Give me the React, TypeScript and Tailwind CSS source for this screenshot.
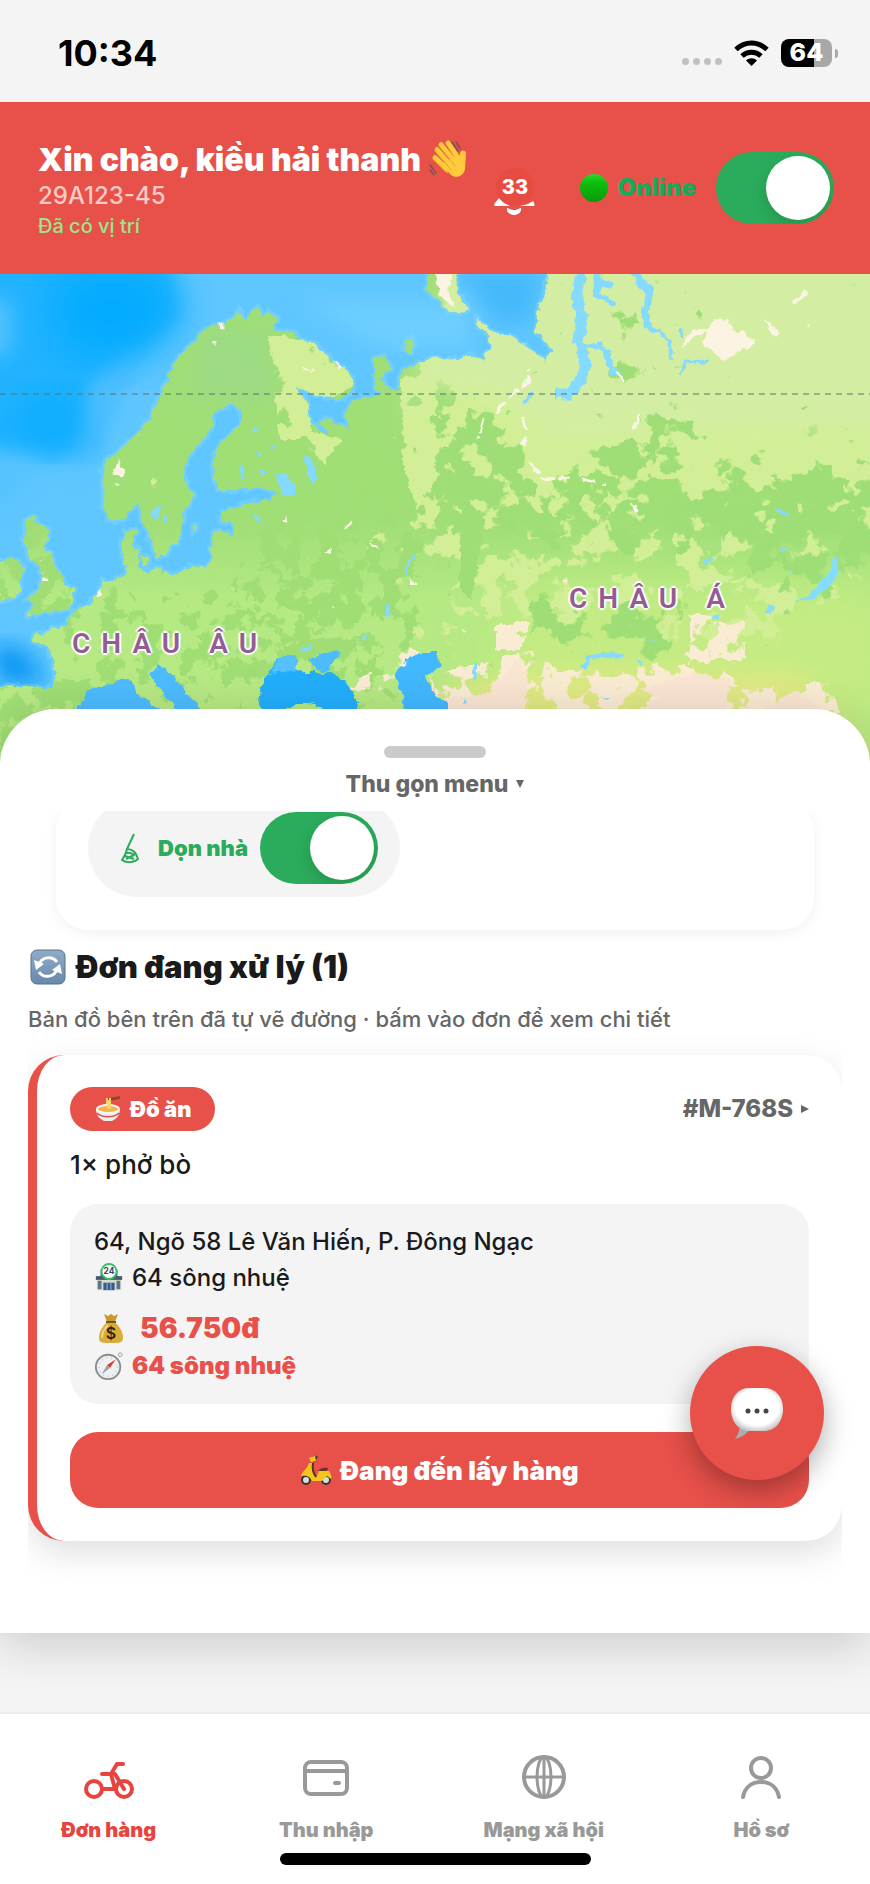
import { useState } from 'react'
import type { ReactNode } from 'react'
import { clsx } from 'clsx'

const font = "font-['Inter','Noto_Sans',sans-serif]"

export default function App() {
  const [online, setOnline] = useState(true)
  const [cleaning, setCleaning] = useState(true)
  const [tab, setTab] = useState(0)

  return (
    <div className={clsx('flex min-h-screen flex-col bg-[#f4f4f4] text-[#1a1a1a]', font)}>
      <StatusBar />
      <header className="flex h-[172px] items-center bg-[#e8504a] pr-9 pl-[38px]">
        <div className="flex-1">
          <h1 className="flex items-center gap-2 pt-1 text-[32px] leading-10 font-black whitespace-nowrap text-white">
            Xin chào, kiều hải thanh <WaveIcon />
          </h1>
          <p className="text-[24px] leading-8 font-medium text-[#fbcac6]">29A123-45</p>
          <p className="text-[20px] leading-7 font-medium text-[#9be58a]">Đã có vị trí</p>
        </div>
        <button aria-label="Thông báo" className="mr-9 flex w-14 justify-center">
          <BellIcon />
        </button>
        <label className="flex items-center text-[24px] leading-8 font-black text-[#17aa5b]">
          <GreenDot />
          <span className="mr-5 ml-2">Online</span>
          <Switch checked={online} onChange={setOnline} />
        </label>
      </header>

      <main className="relative flex-1">
        <WorldMap />
        <section className="relative z-10 -mt-16 rounded-t-[56px] bg-white pb-[92px] shadow-[0_10px_50px_rgba(0,0,0,0.18)]">
          <button className="flex w-full flex-col items-center pt-[37px] pb-[11px]">
            <span className="h-3 w-[102px] rounded-full bg-[#cbcbcb]" />
            <span className="mt-[10px] flex items-center gap-2 text-[23px] leading-8 font-extrabold text-[#666]">
              Thu gọn menu <Caret className="rotate-90" />
            </span>
          </button>

          <div className="overflow-hidden px-14 pb-3">
            <div className="-mt-3 rounded-[32px] bg-white px-8 pb-[33px] shadow-[0_3px_14px_rgba(0,0,0,0.06)]">
              <label className="flex h-[98px] w-fit items-center rounded-full bg-[#f4f4f4] pr-[22px] pl-8 text-[22px] font-black text-[#2bab5c]">
                <BroomIcon />
                <span className="mr-3 ml-[18px]">Dọn nhà</span>
                <Switch checked={cleaning} onChange={setCleaning} />
              </label>
            </div>
          </div>

          <div className="overflow-x-clip mx-7">
            <h2 className="flex items-center gap-2 pt-[5px] text-[31px] leading-10 font-black">
              <RefreshIcon /> Đơn đang xử lý (1)
            </h2>
            <p className="mt-4 text-[22px] leading-8 font-medium text-[#666]">
              Bản đồ bên trên đã tự vẽ đường · bấm vào đơn để xem chi tiết
            </p>
            <Order />
          </div>
        </section>
        <button
          aria-label="Tin nhắn"
          className="absolute right-[46px] bottom-[232px] z-20 flex size-[134px] items-center justify-center rounded-full bg-[#e8504a] shadow-[0_10px_28px_rgba(0,0,0,0.32)]"
        >
          <ChatIcon />
        </button>
        <div className="h-19" />
      </main>

      <nav className="relative border-t-2 border-[#ebebeb] bg-white pt-9 pb-[19px]">
        <div className="grid grid-cols-4">
          {tabs.map((t, i) => (
            <button
              key={t.label}
              onClick={() => setTab(i)}
              className={clsx(
                'flex flex-col items-center text-[20px] leading-7 font-black',
                i == tab ? 'text-[#e8443f]' : 'text-[#999]'
              )}
            >
              <svg
                viewBox="0 0 56 56"
                className="mb-[10px] size-14 fill-none stroke-current stroke-[4]"
                strokeLinecap="round"
                strokeLinejoin="round"
              >
                {t.icon}
              </svg>
              <span>{t.label}</span>
            </button>
          ))}
        </div>
        <div className="mx-auto mt-[9px] h-3 w-[311px] rounded-full bg-black" />
      </nav>
    </div>
  )
}

const tabs: { label: string; icon: ReactNode }[] = [
  {
    label: 'Đơn hàng',
    icon: (
      <>
        <circle cx="13" cy="39" r="8" />
        <circle cx="43" cy="39" r="8" />
        <path d="M21 39h13L30 24M21 24h9l6-10h6M34 24l9 15" />
      </>
    ),
  },
  {
    label: 'Thu nhập',
    icon: (
      <>
        <rect x="7" y="12" width="42" height="32" rx="6" />
        <path d="M7 21h42M37 33h4" />
      </>
    ),
  },
  {
    label: 'Mạng xã hội',
    icon: (
      <>
        <circle cx="28" cy="27" r="20" />
        <ellipse cx="28" cy="27" rx="7" ry="20" className="stroke-[3]" />
        <path d="M28 7v40M8 27h40" className="stroke-[3]" />
      </>
    ),
  },
  {
    label: 'Hồ sơ',
    icon: (
      <>
        <circle cx="28" cy="18" r="10" />
        <path d="M10 47c2-10 9-15 18-15s16 5 18 15" />
      </>
    ),
  },
]

function Order() {
  return (
    <article className="mt-5 rounded-[36px] border-l-[9px] border-[#e8504a] bg-white px-[33px] pt-8 pb-[33px] shadow-[0_12px_34px_rgba(0,0,0,0.13)]">
      <div className="flex items-center justify-between">
        <span className="flex h-11 items-center gap-2 rounded-full bg-[#e8504a] px-6 text-[22px] font-black text-white">
          <BowlIcon /> Đồ ăn
        </span>
        <a href="#order" className="flex items-center gap-2 text-[24px] font-extrabold text-[#666]">
          #M-768S <Caret />
        </a>
      </div>
      <p className="mt-[18px] text-[26px] leading-8 font-medium">1× phở bò</p>
      <div className="mt-[23px] rounded-[28px] bg-[#f4f4f4] px-6 pt-5 pb-5 text-[24px] leading-9 font-medium">
        <p>64, Ngõ 58 Lê Văn Hiến, P. Đông Ngạc</p>
        <p className="flex items-center gap-2">
          <StoreIcon /> 64 sông nhuệ
        </p>
        <p className="mt-3 flex items-center gap-4 pl-1 text-[28px] leading-10 font-black text-[#e8504a]">
          <MoneyIcon /> 56.750đ
        </p>
        <p className="flex items-center gap-2 font-black text-[#e8504a]">
          <CompassIcon /> 64 sông nhuệ
        </p>
      </div>
      <button className="mt-7 flex h-[76px] w-full items-center justify-center gap-2 rounded-[28px] bg-[#e8504a] text-[26px] font-black text-white">
        <ScooterIcon /> Đang đến lấy hàng
      </button>
    </article>
  )
}

type SwitchProps = {
  checked: boolean
  onChange: (v: boolean) => void
}
function Switch({ checked, onChange }: SwitchProps) {
  return (
    <input
      type="checkbox"
      role="switch"
      checked={checked}
      onChange={(e) => onChange(e.target.checked)}
      className="flex h-[72px] w-[118px] shrink-0 appearance-none items-center overflow-hidden rounded-full bg-gray-300 px-1 before:block before:size-16 before:rounded-full before:bg-white before:shadow-[0_6px_16px_rgba(0,0,0,0.15)] checked:justify-end checked:bg-[#2bac5c]"
    />
  )
}

function StatusBar() {
  return (
    <div className="flex h-[102px] items-center justify-between pt-1 pr-8 pl-[58px] text-black">
      <span className="text-[36px] font-bold">10:34</span>
      <div className="flex items-center">
        <div className="mt-4 mr-3 flex gap-1">
          {[0, 1, 2, 3].map((i) => (
            <span key={i} className="size-[7px] rounded-full bg-[#c0c0c0]" />
          ))}
        </div>
        <svg viewBox="0 0 35 26" className="mr-3 h-[26px] w-[35px]" fill="none" stroke="#000" strokeWidth="5">
          <path d="M2 9.500C11 .8 24 .8 33 9.500" />
          <path d="M8 16c5.500-5 13.500-5 19 0" />
          <path d="M17.500 26l-5.500-5.500c3-3 8-3 11 0z" fill="#000" stroke="none" />
        </svg>
        <div className="flex h-7 w-[51px] items-center justify-center rounded-lg bg-linear-to-r from-black from-64% to-[#a8a8a8] to-64% text-[25px] font-extrabold text-white">
          64
        </div>
        <span className="ml-[3px] h-[9px] w-[3px] rounded-r-full bg-[#a8a8a8]" />
      </div>
    </div>
  )
}

const land =
  'M258 305L263 316L268 312L278 318L272 330L285 332L295 333L300 340L316 345L330 358L345 370L353 381L352 390L345 398L335 400L320 395L305 391L294 387L300 395L308 403L310 420L322 432L332 437L328 430L320 424L325 418L335 425L348 427L345 415L352 402L365 396L380 396L375 385L375 370L373 358L385 356L391 368L380 378L390 388L398 390L400 375L415 364L432 358L450 360L470 356L483 358L492 348L488 333L510 335L525 345L540 355L546 362L551 350L543 340L535 332L538 310L545 295L548 264H880V790H-10V690L3 687L20 685L40 688L53 688L56 670L53 658L47 645L35 642L33 635L48 633L52 628L68 625L70 618L78 610L90 602L98 592L103 582L115 580L127 573L124 560L121 545L125 533L136 530L132 545L140 550L138 565L145 572L158 568L170 575L180 572L192 565L203 568L213 560L211 548L214 532L222 530L232 538L235 530L228 522L220 520L222 512L230 510L250 502L270 500L277 492L260 487L235 490L217 490L215 480L214 465L215 450L225 440L240 425L243 415L235 405L220 408L213 415L212 425L205 440L195 448L186 460L184 475L188 486L194 497L183 515L180 530L178 543L170 545L165 555L157 557L150 540L143 520L139 503L135 506L125 517L115 522L107 518L103 505L105 490L102 472L105 462L118 452L130 440L140 430L150 418L155 405L162 392L168 380L172 368L180 355L190 345L200 334L212 326L225 325L240 310L245 322Z'
const islands =
  'M25 520L35 516L37 525L48 528L48 538L43 548L50 552L57 570L65 585L75 590L73 600L70 610L55 612L40 613L28 617L35 605L27 598L38 590L42 580L40 565L30 560L25 545L25 530ZM-9 562L15 560L23 563L22 575L20 590L12 598L-9 603ZM430 264H455L457 290L467 311L450 313L440 300L426 290ZM404 340l8-2l4 6l-5 9l-6-2ZM476 318l6 6l10 8l-4 2l-10-8ZM192 528l5-4l-2 7l-3 3ZM127 692l5 5l-3 8l-4-4ZM140 558l8-2l2 8l-7 2Z'

// Terrain patches: noise is thresholded, the alpha of the shape sets how dense they are
function PatchFilter({ id, color, freq, seed }: { id: string; color: string; freq: string; seed: number }) {
  return (
    <filter id={id} x="0" y="0" width="1" height="1" colorInterpolationFilters="sRGB">
      <feTurbulence type="fractalNoise" baseFrequency={freq} numOctaves="4" seed={seed} />
      <feColorMatrix values="0 0 0 0 0 0 0 0 0 0 0 0 0 0 0 1 0 0 0 0" result="noise" />
      <feComposite in="noise" in2="SourceAlpha" operator="arithmetic" k1="0" k2="1" k3="0.7" k4="0" />
      <feComponentTransfer result="mask">
        <feFuncA type="linear" slope="22" intercept="-18.5" />
      </feComponentTransfer>
      <feFlood floodColor={color} />
      <feComposite in2="mask" operator="in" />
    </filter>
  )
}

function WorldMap() {
  return (
    <div className="relative h-[499px] overflow-hidden bg-[#5fc6ff]">
      <svg viewBox="0 274 870 499" preserveAspectRatio="xMidYMid slice" className="size-full">
        <defs>
          <filter id="soft" x="-.3" y="-.3" width="1.6" height="1.6">
            <feGaussianBlur stdDeviation="10" />
          </filter>
          <filter id="wide" x="-.3" y="-.3" width="1.6" height="1.6">
            <feGaussianBlur stdDeviation="24" />
          </filter>
          <filter id="rough" x="0" y="0" width="1" height="1">
            <feTurbulence type="fractalNoise" baseFrequency=".11" numOctaves="3" seed="4" result="n" />
            <feDisplacementMap in="SourceGraphic" in2="n" scale="8" xChannelSelector="R" yChannelSelector="G" />
          </filter>
          <PatchFilter id="pale" color="#d2ef97" freq=".034" seed={8} />
          <PatchFilter id="green" color="#9fde76" freq=".036" seed={21} />
          <PatchFilter id="fine" color="#a0de75" freq=".05" seed={3} />
          <PatchFilter id="sand" color="#faebd3" freq=".04" seed={14} />
          <linearGradient id="south" x1="0" x2="0" y1="0" y2="1">
            <stop offset="0" stopColor="#b5e984" stopOpacity="0" />
            <stop offset=".3" stopColor="#b5e984" />
            <stop offset="1" stopColor="#b9e983" />
          </linearGradient>
          <clipPath id="landClip">
            <path d={land} />
            <path d={islands} />
          </clipPath>
        </defs>

        <path d="M-30 240H165L182 315L150 345L120 375L90 385L95 450L50 458L-30 450Z" fill="#22b3ff" filter="url(#soft)" />
        <path d="M60 270H165L175 325L140 350L80 360L50 320Z" fill="#04aaff" filter="url(#wide)" />
        <path d="M20 400L75 395L85 430L55 448L20 440Z" fill="#04aaff" filter="url(#wide)" />
        <path d="M-20 300H10L12 350L-20 360ZM-20 460L40 460L10 500L-20 510Z" fill="#55c2ff" filter="url(#soft)" />
        <path d="M100 380L140 350L110 420L75 480L90 420Z" fill="#47bcff" filter="url(#soft)" />
        <path d="M-10 645L15 645L35 660L45 682L0 685Z" fill="#0799f5" filter="url(#soft)" />
        <path d="M455 270H540L532 320L500 325Z" fill="#45b9fb" filter="url(#soft)" />
        <path d="M300 300H470V350H380Z" fill="#6dceff" filter="url(#soft)" />
        <path
          d={land + islands}
          fill="none"
          stroke="#8edcff"
          strokeWidth="6"
          strokeLinejoin="round"
          opacity=".35"
          filter="url(#rough)"
        />

        <g filter="url(#rough)">
          <g clipPath="url(#landClip)">
            <path d="M-10 260H890V790H-10Z" fill="#a0de76" />
            <path d="M-10 520H890V790H-10Z" fill="url(#south)" />
            <path d="M500 590H890V720H500Z" fill="#c9ec83" filter="url(#wide)" opacity=".8" />
            <path d="M530 672H800L840 720L890 790H440V690Z" fill="#e0e983" filter="url(#soft)" />
            <path d="M200 325L270 330L275 400L190 400Z" fill="#9cdb83" filter="url(#soft)" />

            <g filter="url(#pale)">
              <path d="M0 260H870V780H0Z" fill="#000" opacity=".01" />
              <path d="M268 335L320 340L358 385L320 402L310 430L340 440L325 465L300 440L280 440L275 390Z" opacity=".8" />
              <path d="M400 380L436 370V520H420L402 460Z" opacity=".68" />
              <path d="M440 200H1000V480H620L440 500Z" filter="url(#wide)" />
              <path d="M430 460H1000V540H430Z" opacity=".42" filter="url(#wide)" />
              <path d="M440 540H820L860 640H460Z" opacity=".5" filter="url(#wide)" />
              <path d="M320 500H440V560L430 700H380L390 560Z" opacity=".45" filter="url(#wide)" />
            </g>
            <path
              d="M455 260H890V430H640L560 440L490 390L410 385L400 440Z"
              fill="#d3eea2"
              filter="url(#soft)"
            />
            <g filter="url(#green)">
              <path d="M0 260H870V780H0Z" fill="#000" opacity=".01" />
              <path d="M430 390L475 395L530 450L500 500L440 500Z" opacity=".55" filter="url(#soft)" />
              <path d="M600 410H700L690 480H590Z" opacity=".5" filter="url(#soft)" />
              <path d="M430 480H640L900 470V545H430Z" opacity=".58" filter="url(#wide)" />
              <path d="M680 480H900V560L850 610H780Z" opacity=".45" filter="url(#wide)" />
              <path d="M520 600H680V650H520Z" opacity=".55" filter="url(#soft)" />
              <path d="M550 280H700V390H550Z" opacity=".25" filter="url(#soft)" />
              <path d="M460 490L485 520L472 600L460 590Z" opacity=".8" />
            </g>
            <g filter="url(#fine)">
              <path d="M0 260H870V780H0Z" fill="#000" opacity=".01" />
              <path d="M60 590H400V710H60Z" opacity=".5" filter="url(#wide)" />
              <path d="M0 520H70V620H0ZM0 680H90V770H0Z" opacity=".6" />
              <path d="M240 490H440V620H240Z" opacity=".5" filter="url(#wide)" />
            </g>
            <g filter="url(#sand)">
              <path d="M0 260H870V780H0Z" fill="#000" opacity=".01" />
              <path d="M430 676L530 650L560 672L640 665L700 650L745 690L830 680L840 712H430Z" opacity=".55" />
              <path d="M690 615H745V660H690Z" opacity=".6" />
              <path d="M495 625L530 622L520 650H495Z" opacity=".85" />
              <path d="M400 640L425 655L410 690L350 690Z" opacity=".4" />
            </g>
            <path d="M640 690L690 673L730 680L725 712H640L660 698ZM440 700L490 692L520 655L528 690L520 712H440Z" fill="#fae5d2" />
            <path d="M775 700L800 692L825 712H760Z" fill="#fae5d2" />
          </g>

          {/* seas and lakes inside the land */}
          <path
            d="M76 714L85 696L90 688L105 688L118 680L128 678L135 690L147 700L165 714ZM150 675L158 665L165 668L175 680L190 695L204 714H180L165 695ZM310 660L325 653L340 650L332 660L328 672L315 670Z"
            fill="#4dbcff"
          />
          <path
            d="M259 702L262 685L272 670L275 660L288 655L298 660L297 668L305 673L330 673L345 680L358 703L355 712H325L312 703H295L285 712H262Z"
            fill="#20aefb"
          />
          <path d="M276 660L288 655L298 660L296 670L272 674Z" fill="#56c1ff" />
          <path
            d="M395 675L405 660L420 653H437L440 668L425 675L430 690L449 704V714H407L402 695Z"
            fill="#42b8ff"
          />
          <path
            d="M275 473L285 475L295 485L294 494L282 494L278 485ZM305 455L312 460L318 478L313 484L306 470ZM252 427l8 3l-3 4ZM240 467l3 1l1 12l-3-2ZM255 448l8 8l-4 2ZM270 445l6 3l-5 3ZM258 472l8-2l-3 6ZM152 510l10-6l-4 14l-7 0ZM163 517l5-3l-4 10ZM256 512l5 6l-3 6l-4-6Z"
            fill="#84d9ff"
          />
          <path
            d="M837 552L838 575L825 590L810 600L795 602L815 590L828 575ZM712 615l10-2l-3 6h-6ZM770 603l4 4l-3 8l-3-3ZM650 639l10 3l-6 1ZM637 658l6 4l-2 3ZM465 697l5 6l-5 3ZM600 697l12 0l-5 3ZM780 548l9 0l-7 5ZM788 566l4 8l0 5ZM474 683l4-19l-3 0l-3 8Z"
            fill="#84ddff"
          />
          <g fill="none" stroke="#84daff" strokeLinejoin="round">
            <path d="M582 262L577 300L582 320L578 340L586 362L580 380L570 394L555 394" strokeWidth="11" />
            <path d="M585 347L600 345L608 355L610 370L620 374" strokeWidth="5" />
            <path d="M597 262L598 295L616 305M600 280l12 6" strokeWidth="6" />
            <path d="M626 262L642 283L650 293L646 310L648 328" strokeWidth="8" />
            <path d="M648 328L660 332L668 340L672 360M680 375L685 362L708 361M682 328v10" strokeWidth="3" />
            <path d="M583 670L588 658L605 655L624 657" strokeWidth="5" />
            <path
              d="M531 394L524 404M405 575L409 562L415 556M387 618L388 604M363 640L367 636M704 564l10-6M775 510l14 4M302 650l10-4"
              strokeWidth="3"
            />
          </g>
          <path
            d="M432 262H452L448 290L455 308L440 296ZM685 338L695 328L708 330L715 318L727 320L732 330L748 335L756 343L745 348L733 355L722 360L712 352L703 345L705 332L690 340L684 350ZM792 302L805 290L808 294L795 305ZM765 319l8 8l8 6l-3 5l-6-3ZM808 322l2 6l-4-2ZM119 460l6 12l-3 4h-8ZM115 482h7l-5 2ZM96 598l4-10l1 8ZM326 550l5-4l0 8l-5-1ZM335 360l6 6l-4 3ZM300 368h12l-8 4ZM218 320l6 8l-5-1ZM212 340l4 2l-3 3ZM42 577l5 4h-5ZM282 522l2-7l2 7ZM370 543l8 5l-7-1ZM410 578l7 5l-6 0ZM398 665l10-4l-5 4Z"
            fill="#fbf4e2"
          />
          <path
            d="M496 412L510 396L530 380L528 367M523 418L527 435L524 447M530 463L543 479L570 478M582 479L606 485M484 418L478 440M616 372l8 8M630 506l8 4M640 415l-6 14M345 528l8-6"
            fill="none"
            stroke="#fbf6e8"
            strokeWidth="3"
            strokeDasharray="14 5"
          />
        </g>
        <path d="M0 394H870" stroke="#54766a" strokeOpacity=".5" strokeWidth="2" strokeDasharray="6 5" />
      </svg>
      <MapLabel className="top-[352px] left-[72px]">CHÂU ÂU</MapLabel>
      <MapLabel className="top-[307px] left-[569px]">CHÂU Á</MapLabel>
    </div>
  )
}

function MapLabel({ className, children }: { className: string; children: ReactNode }) {
  return (
    <span
      className={clsx(
        "absolute font-['Roboto','Noto_Sans',sans-serif] text-[28px] leading-9 font-semibold tracking-[11px] whitespace-nowrap text-[#935d94]",
        '[text-shadow:-2px_0_1px_#fff,2px_0_1px_#fff,0_-2px_1px_#fff,0_2px_1px_#fff,0_0_3px_#fff]',
        className
      )}
    >
      {children}
    </span>
  )
}

function Caret({ className }: { className?: string }) {
  return (
    <svg viewBox="0 0 8 8" className={clsx('size-2 fill-current', className)}>
      <path d="M0 0l8 4l-8 4z" />
    </svg>
  )
}

function WaveIcon() {
  return (
    <svg viewBox="0 0 40 40" className="size-10" fill="none" strokeLinecap="round">
      <path
        d="M8 10l12 14M12 5l13 16M19 3l11 16M6 18l12 12"
        stroke="#f6b92b"
        strokeWidth="5"
      />
      <path d="M8 9l12 14M12 4l13 16M19 3l11 16M6 17l12 12" stroke="#ffcb3d" strokeWidth="4" />
      <path d="M12 24L28 15c2 2 3 1 3-1c0-4 5-5 6-1l-1 16c-1 7-9 10-14 6z" fill="#ffcb3d" />
      <path d="M15 21l7 9M20 18l6 8" stroke="#e5a524" strokeWidth="1" />
      <path d="M23 2l6 9M27 2l4 6M1 25l6 8M1 30l4 5" stroke="#7c5552" strokeWidth="1.500" />
    </svg>
  )
}

function BellIcon() {
  return (
    <svg viewBox="0 0 56 56" className="size-14">
      <path d="M8 46c-1 0-1-2 0-3l4-5l5 5l6 3zM46 46c2 0 2-2 0-5l-5 3l-8 2z" fill="#fff" />
      <path d="M20 48c2 0 3 2 7 2s5-2 7-2c1 4-3 7-7 7s-8-3-7-7z" fill="#fff" />
      <circle cx="28" cy="27" r="19" fill="#e74c43" />
      <text x="28" y="34" fill="#fff" textAnchor="middle" className="text-[20px] font-extrabold">
        33
      </text>
    </svg>
  )
}

function GreenDot() {
  return (
    <svg viewBox="0 0 30 30" className="size-[30px]">
      <defs>
        <linearGradient id="dot" x1="0" x2="0" y1="0" y2="1">
          <stop offset="0" stopColor="#2fd62f" />
          <stop offset=".3" stopColor="#0cc00c" />
          <stop offset="1" stopColor="#0a9a0a" />
        </linearGradient>
      </defs>
      <circle cx="15" cy="15" r="14" fill="url(#dot)" />
    </svg>
  )
}

function BroomIcon() {
  return (
    <svg viewBox="0 0 20 30" className="h-[30px] w-5" fill="none" stroke="#2bab5c" strokeWidth="2">
      <path d="M14 1L7 16M7 16c5 0 9 3 11 10c-4 4-12 4-16 1c2-3 4-6 5-11zM6 20c4-1 7 1 9 2M5 23l9 3M6 26l8-4" />
    </svg>
  )
}

function RefreshIcon() {
  return (
    <svg viewBox="0 0 40 40" className="size-10" fill="none">
      <defs>
        <linearGradient id="tile" x1="0" x2="0" y1="0" y2="1">
          <stop offset="0" stopColor="#91abc6" />
          <stop offset="1" stopColor="#6889ab" />
        </linearGradient>
      </defs>
      <rect x="3" y="3" width="34" height="34" rx="6" fill="url(#tile)" stroke="#58718c" />
      <path d="M11 18c2-8 13-10 18-3M29 22c-2 8-13 10-18 3" stroke="#fff" strokeWidth="3" />
      <path d="M6 13l2 10l8-6zM34 27l-2-10l-8 6z" fill="#fff" />
    </svg>
  )
}

function BowlIcon() {
  return (
    <svg viewBox="0 0 28 28" className="size-7" fill="none">
      <path d="M13 4l13-2M12 6l14-3" stroke="#8a4a22" strokeWidth="1.500" />
      <path d="M13 3v10M16 3v10" stroke="#ffd46b" strokeWidth="2" />
      <path d="M2 14c0 8 6 11 8 12h8c2-1 8-4 8-12z" fill="#eceff1" />
      <ellipse cx="14" cy="14" rx="12" ry="5" fill="#f5f5f5" />
      <ellipse cx="14" cy="14" rx="10" ry="3" fill="#f3b24c" />
      <path d="M13 5v9h4V5z" fill="#ffd46b" />
      <path d="M3 18c5 5 17 5 22 0" stroke="#d9534a" strokeWidth="1.500" />
    </svg>
  )
}

function StoreIcon() {
  return (
    <svg viewBox="0 0 32 32" className="size-[30px]" fill="none">
      <path d="M7 7h18v8H7z" fill="#2d6b48" />
      <path d="M3 16h26v13H3z" fill="#d9dcc9" />
      <path d="M2 14h28v4H2z" fill="#46586d" />
      <path d="M10 21h12v8H10z" fill="#395a91" />
      <path d="M14 21v8M18 21v8" stroke="#9ac0e8" />
      <path d="M4 19h4v9H4zM24 19h4v9h-4z" fill="#5b7790" />
      <circle cx="16" cy="9" r="8" fill="#fff" stroke="#3dbb68" strokeWidth="2" />
      <text x="16" y="12" textAnchor="middle" fill="#33446b" className="text-[9px] font-bold">
        24
      </text>
    </svg>
  )
}

function MoneyIcon() {
  return (
    <svg viewBox="0 0 26 32" className="h-8 w-[26px]" fill="none">
      <path d="M6 2l4 2l3-2l3 2l4-2l-3 8H9z" fill="#c99a2e" />
      <path d="M9 10h8c5 5 8 10 8 16c0 5-4 5-12 5S1 31 1 26c0-6 3-11 8-16z" fill="#d9ad3a" />
      <path d="M10 13c-4 4-6 8-6 13" stroke="#f1d679" strokeWidth="2" />
      <path d="M8 10h10" stroke="#7d5418" strokeWidth="2" />
      <text x="13" y="27" textAnchor="middle" fill="#2e2410" className="text-[16px] font-semibold">
        $
      </text>
    </svg>
  )
}

function CompassIcon() {
  return (
    <svg viewBox="0 0 32 32" className="size-[30px]" fill="none">
      <circle cx="28" cy="4" r="2" stroke="#9b9b9b" />
      <circle cx="15" cy="17" r="13" fill="#eef0f2" stroke="#858b90" strokeWidth="2" />
      <circle cx="15" cy="17" r="10" stroke="#c8ccd0" strokeDasharray="1 4" strokeWidth="2" />
      <path d="M23 9l-6 9l-3-3z" fill="#e4352f" />
      <path d="M8 25l6-10l3 3z" fill="#9aa0a6" />
    </svg>
  )
}

function ScooterIcon() {
  return (
    <svg viewBox="0 0 32 32" className="size-8" fill="none">
      <circle cx="6" cy="26" r="4" fill="#ddd" stroke="#333" strokeWidth="2" />
      <circle cx="26" cy="26" r="4" fill="#ddd" stroke="#333" strokeWidth="2" />
      <path d="M14 8l3-6" stroke="#3b3b3b" strokeWidth="2" />
      <path d="M9 4l6-2l1 5l-5 1z" fill="#f4c51f" />
      <path d="M1 22c1-5 5-5 8-13h4c-1 6 0 11 3 15l3-7h10c2 3 3 6 2 8l-4-3l-5 5H12c-2-5-6-6-11-5z" fill="#f4c51f" />
      <path d="M13 9c-1 6 0 10 3 14" stroke="#4a3a1a" strokeWidth="2" />
      <path d="M18 17c2-3 6-4 10-3l-1 3z" fill="#6d3420" />
    </svg>
  )
}

function ChatIcon() {
  return (
    <svg viewBox="0 0 56 56" className="size-14">
      <defs>
        <radialGradient id="bubble" cx=".5" cy=".45" r=".6">
          <stop offset=".7" stopColor="#fff" />
          <stop offset="1" stopColor="#b9b9b9" />
        </radialGradient>
      </defs>
      <path d="M11 38c0 7-2 12-5 16c8-2 12-6 16-11z" fill="#a9adb0" />
      <path d="M2 24C2 11 10 3 20 3h15c11 0 19 8 19 21s-8 22-19 22H20C10 46 2 37 2 24z" fill="url(#bubble)" />
      <circle cx="19" cy="26" r="2.500" fill="#444" />
      <circle cx="28" cy="26" r="2.500" fill="#444" />
      <circle cx="37" cy="26" r="2.500" fill="#444" />
    </svg>
  )
}
